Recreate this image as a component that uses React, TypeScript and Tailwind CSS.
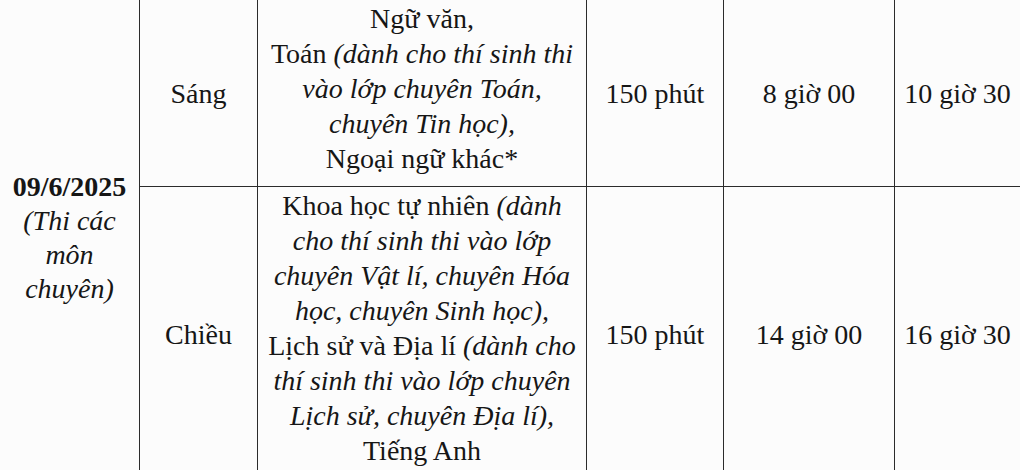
const serif = "font-['Liberation_Serif','Times_New_Roman',serif]";

function Cell({ w, children, top }: { w: string; children: React.ReactNode; top?: boolean }) {
  return (
    <div
      className={`${w} shrink-0 border-l-[1.5px] border-[#2b2b2b] flex justify-center text-center ${top ? "items-start pt-[1px]" : "items-center"}`}
    >
      <div className="whitespace-nowrap">{children}</div>
    </div>
  );
}

function Row({ h, session, subjects, duration, start, end, border }: {
  h: string; session: string; subjects: React.ReactNode; duration: string; start: string; end: string; border?: boolean;
}) {
  return (
    <div className={`flex ${h} shrink-0 ${border ? "border-b-[1.5px] border-[#2b2b2b]" : ""}`}>
      <Cell w="w-[118px]">{session}</Cell>
      <Cell w="w-[329px]" top>{subjects}</Cell>
      <Cell w="w-[137px]">{duration}</Cell>
      <Cell w="w-[171px]">{start}</Cell>
      <Cell w="w-[126px]">{end}</Cell>
    </div>
  );
}

export default function App() {
  return (
    <div className={`w-[1020px] h-[470px] overflow-hidden bg-[#fcfcfc] text-[#161616] text-[28px] leading-[35px] ${serif}`}>
      <div className="flex h-[481px]">
        <div className="w-[139px] shrink-0 flex items-center justify-center pb-[6px] text-center leading-[34px]">
          <div>
            <div className="font-bold">09/6/2025</div>
            <div className="italic">(Thi các</div>
            <div className="italic">môn</div>
            <div className="italic">chuyên)</div>
          </div>
        </div>
        <div className="flex flex-col">
          <Row
            h="h-[187px]"
            border
            session="Sáng"
            duration="150 phút"
            start="8 giờ 00"
            end="10 giờ 30"
            subjects={
              <>
                <div>Ngữ văn,</div>
                <div>Toán <i>(dành cho thí sinh thi</i></div>
                <div><i>vào lớp chuyên Toán,</i></div>
                <div><i>chuyên Tin học),</i></div>
                <div>Ngoại ngữ khác*</div>
              </>
            }
          />
          <Row
            h="h-[294px]"
            session="Chiều"
            duration="150 phút"
            start="14 giờ 00"
            end="16 giờ 30"
            subjects={
              <>
                <div>Khoa học tự nhiên <i>(dành</i></div>
                <div><i>cho thí sinh thi vào lớp</i></div>
                <div><i>chuyên Vật lí, chuyên Hóa</i></div>
                <div><i>học, chuyên Sinh học),</i></div>
                <div>Lịch sử và Địa lí <i>(dành cho</i></div>
                <div><i>thí sinh thi vào lớp chuyên</i></div>
                <div><i>Lịch sử, chuyên Địa lí),</i></div>
                <div>Tiếng Anh</div>
              </>
            }
          />
        </div>
      </div>
    </div>
  );
}
